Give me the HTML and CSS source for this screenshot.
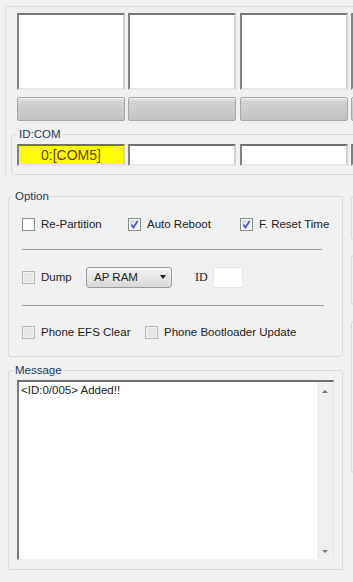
FILE: index.html
```html
<!DOCTYPE html>
<html lang="en">
  <head>
    <meta charset="UTF-8" />
    <meta name="viewport" content="width=device-width, initial-scale=1.0" />
    <title>Odin</title>
    <link rel="stylesheet" href="styles.css">
  </head>
  <body>
    <div class="ports">
      <div class="cells">
        <div class="slot"></div>
        <div class="slot"></div>
        <div class="slot"></div>
        <div class="slot"></div>
      </div>
      <div class="cells bars">
        <div class="bar"></div>
        <div class="bar"></div>
        <div class="bar"></div>
        <div class="bar"></div>
      </div>
      <fieldset class="group idcom">
        <legend>ID:COM</legend>
        <div class="cells group-body">
          <div class="com active">0:[COM5]</div>
          <div class="com"></div>
          <div class="com"></div>
          <div class="com"></div>
        </div>
      </fieldset>
    </div>

    <div class="lower">
      <div class="main-col">
        <fieldset class="group option">
          <legend>Option</legend>
          <div class="group-body">
            <div class="row">
              <label class="check w-partition"><span class="box"></span>Re-Partition</label>
              <label class="check w-reboot"><span class="box on"><svg viewBox="0 0 11 11"><path d="M2.5 5.5 L4.5 8.5 L8.7 1.8" /></svg></span>Auto Reboot</label>
              <label class="check"><span class="box on"><svg viewBox="0 0 11 11"><path d="M2.5 5.5 L4.5 8.5 L8.7 1.8" /></svg></span>F. Reset Time</label>
            </div>
            <div class="sep sep-one"></div>
            <div class="row row-dump">
              <label class="check w-dump"><span class="box off"></span>Dump</label>
              <div class="select">AP RAM<span class="caret"></span></div>
              <span class="id-label">ID</span>
              <div class="id-field"></div>
            </div>
            <div class="sep sep-two"></div>
            <div class="row row-phone">
              <label class="check w-efs"><span class="box off"></span>Phone EFS Clear</label>
              <label class="check"><span class="box off"></span>Phone Bootloader Update</label>
            </div>
          </div>
        </fieldset>

        <fieldset class="group message">
          <legend>Message</legend>
          <div class="group-body">
            <div class="log">
              <div class="log-text">&lt;ID:0/005&gt; Added!!</div>
              <div class="scroll">
                <span class="arrow up"></span>
                <span class="arrow down"></span>
              </div>
            </div>
          </div>
        </fieldset>
      </div>

      <div class="side-col">
        <div class="side-box b1"></div>
        <div class="side-box b2"></div>
        <div class="side-box b3"></div>
      </div>
    </div>
  </body>
</html>
```

FILE: styles.css
```css
body {
  margin: 0;
  width: 353px;
  height: 582px;
  overflow: hidden;
  background: #f0f0f0;
  font-family: "Liberation Sans", Arial, sans-serif;
  font-size: 11.5px;
  color: #222;
}

/* top port area */
.ports {
  width: 600px;
  margin: 6px 0 0 5px;
  border-left: 1px solid #dcdcdc;
  border-top: 1px solid #dcdcdc;
  padding: 6px 0 3px 11px;
}
.cells {
  display: grid;
  grid-template-columns: repeat(4, 108px);
  column-gap: 3.4px;
}
.slot {
  height: 77px;
  box-sizing: border-box;
  background: #fff;
  border: 2px solid;
  border-color: #777 #d0d0d0 #e8e8e8 #858585;
}
.bars {
  margin-top: 7px;
}
.bar {
  height: 24px;
  box-sizing: border-box;
  border: 1px solid #a8a8a8;
  border-radius: 2px;
  background: linear-gradient(#e6e6e6, #d2d2d2 20%, #c8c8c8 70%, #c2c2c2);
  box-shadow: inset 0 1px 0 #f2f2f2;
}

/* group boxes */
.group {
  margin: 0;
  padding: 0;
  min-width: 0;
  border: 1px solid #d5dbe0;
  border-radius: 3px;
}
.group legend {
  margin-left: 4px;
  padding: 0 2px;
  line-height: 12px;
  color: #1e395b;
}
.idcom {
  margin: 7px 0 0 -6px;
}
.idcom legend {
  margin-left: 5px;
}
.idcom .group-body {
  padding: 4px 0 8px 5px;
}
.com {
  height: 22px;
  box-sizing: border-box;
  border: 2px solid;
  border-color: #707070 #d0d0d0 #e8e8e8 #808080;
  background: #fff;
  display: flex;
  align-items: center;
  justify-content: center;
  font-size: 14px;
}
.com.active {
  background: #ffff00;
  color: #6b3a00;
}

/* lower part */
.lower {
  display: flex;
  margin-top: 12px;
  padding-left: 8px;
}
.main-col {
  width: 335px;
  flex: none;
}
.option .group-body {
  padding: 11px 0 13px 13px;
}
.row {
  display: flex;
  align-items: center;
  height: 22px;
}
.row-dump {
  margin-top: 16px;
}
.row-phone {
  margin-top: 15px;
}
.sep {
  width: 300px;
  height: 1px;
  background: #a0a0a0;
}
.sep-one {
  margin-top: 14px;
}
.sep-two {
  width: 302px;
  margin-top: 17px;
}

.check {
  display: flex;
  align-items: center;
  gap: 6px;
  white-space: nowrap;
}
.w-partition {
  width: 106px;
}
.w-reboot {
  width: 112px;
}
.w-dump {
  width: 64px;
}
.w-efs {
  width: 123px;
}
.box {
  width: 13px;
  height: 13px;
  box-sizing: border-box;
  border: 1px solid #8e8f8f;
  background: #fff;
  display: flex;
}
.box.on {
  background: linear-gradient(135deg, #d8d9db, #f6f6f6);
  box-shadow: inset 0 0 0 1px #f4f4f4;
}
.box.off {
  border-color: #b8b8b8;
  background: #e6e6e6;
  box-shadow: inset 0 0 0 1px #f2f2f2;
}
.box svg {
  width: 11px;
  height: 11px;
}
.box path {
  fill: none;
  stroke: #3a56a6;
  stroke-width: 1.5;
}

.select {
  width: 86px;
  height: 21px;
  box-sizing: border-box;
  border: 1px solid #9c9c9c;
  border-radius: 3px;
  background: linear-gradient(#f6f6f6, #e6e6e6 50%, #d9d9d9);
  display: flex;
  align-items: center;
  justify-content: space-between;
  padding: 0 5px 0 7px;
}
.caret {
  border-top: 4px solid #222;
  border-left: 3px solid transparent;
  border-right: 3px solid transparent;
}
.id-label {
  margin-left: 23px;
  font-family: "Liberation Serif", serif;
  font-size: 12px;
}
.id-field {
  width: 30px;
  height: 21px;
  box-sizing: border-box;
  margin-left: 5px;
  background: #fff;
  border: 1px solid #e4e4e4;
}

.message {
  margin-top: 7px;
}
.message .group-body {
  padding: 4px 8px 9px 8px;
}
.log {
  height: 180px;
  box-sizing: border-box;
  display: flex;
  border-style: solid;
  border-width: 2px 1px 1px 2px;
  border-color: #6f6f6f #e6e6e6 #f4f4f4 #7c7c7c;
  background: #fff;
}
.log-text {
  flex: 1;
  padding: 1px 2px;
  line-height: 14px;
}
.scroll {
  width: 16px;
  background: #efefef;
  display: flex;
  flex-direction: column;
  justify-content: space-between;
  align-items: center;
  padding: 8px 0 6px;
}
.arrow {
  border-left: 3px solid transparent;
  border-right: 3px solid transparent;
}
.arrow.up {
  border-bottom: 3px solid #777;
}
.arrow.down {
  border-top: 3px solid #777;
}

/* partly hidden column on the right */
.side-col {
  margin-left: 8px;
  flex: none;
}
.side-box {
  width: 100px;
  border: 1px solid #d5dbe0;
  border-radius: 3px;
}
.b1 {
  margin-top: 6px;
  height: 42px;
}
.b2 {
  margin-top: 15px;
  height: 48px;
}
.b3 {
  margin-top: 16px;
  height: 150px;
}
```
